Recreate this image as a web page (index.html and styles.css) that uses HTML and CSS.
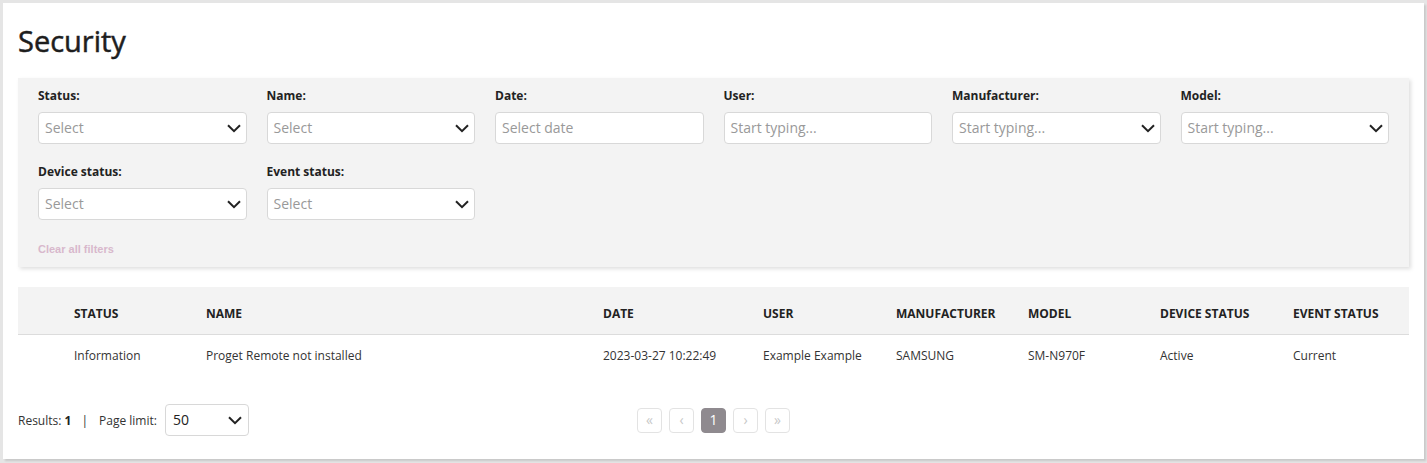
FILE: index.html
```html
<!DOCTYPE html>
<html lang="en">
<head>
<meta charset="utf-8">
<title>Security</title>
<link rel="stylesheet" href="styles.css">
</head>
<body>
<div class="card">
  <h1 class="title">Security</h1>

  <section class="filters">
    <div class="filter-grid">
      <div class="field">
        <label class="label">Status:</label>
        <div class="control"><span class="ph">Select</span><svg class="chev" width="14" height="9" viewBox="0 0 14 9"><path d="M1 1.2l6 6 6-6" fill="none" stroke="#222" stroke-width="2"/></svg></div>
      </div>
      <div class="field">
        <label class="label">Name:</label>
        <div class="control"><span class="ph">Select</span><svg class="chev" width="14" height="9" viewBox="0 0 14 9"><path d="M1 1.2l6 6 6-6" fill="none" stroke="#222" stroke-width="2"/></svg></div>
      </div>
      <div class="field">
        <label class="label">Date:</label>
        <div class="control"><span class="ph">Select date</span></div>
      </div>
      <div class="field">
        <label class="label">User:</label>
        <div class="control"><span class="ph">Start typing...</span></div>
      </div>
      <div class="field">
        <label class="label">Manufacturer:</label>
        <div class="control"><span class="ph">Start typing...</span><svg class="chev" width="14" height="9" viewBox="0 0 14 9"><path d="M1 1.2l6 6 6-6" fill="none" stroke="#222" stroke-width="2"/></svg></div>
      </div>
      <div class="field">
        <label class="label">Model:</label>
        <div class="control"><span class="ph">Start typing...</span><svg class="chev" width="14" height="9" viewBox="0 0 14 9"><path d="M1 1.2l6 6 6-6" fill="none" stroke="#222" stroke-width="2"/></svg></div>
      </div>
      <div class="field">
        <label class="label">Device status:</label>
        <div class="control"><span class="ph">Select</span><svg class="chev" width="14" height="9" viewBox="0 0 14 9"><path d="M1 1.2l6 6 6-6" fill="none" stroke="#222" stroke-width="2"/></svg></div>
      </div>
      <div class="field">
        <label class="label">Event status:</label>
        <div class="control"><span class="ph">Select</span><svg class="chev" width="14" height="9" viewBox="0 0 14 9"><path d="M1 1.2l6 6 6-6" fill="none" stroke="#222" stroke-width="2"/></svg></div>
      </div>
    </div>
    <div class="clear">Clear all filters</div>
  </section>

  <table class="grid">
    <colgroup>
      <col class="c-sel"><col class="c-132"><col class="c-name"><col class="c-date"><col class="c-133"><col class="c-132"><col class="c-132"><col class="c-133"><col>
    </colgroup>
    <thead>
      <tr><th></th><th>Status</th><th>Name</th><th>Date</th><th>User</th><th>Manufacturer</th><th>Model</th><th>Device status</th><th>Event status</th></tr>
    </thead>
    <tbody>
      <tr><td></td><td>Information</td><td>Proget Remote not installed</td><td>2023-03-27 10:22:49</td><td>Example Example</td><td>SAMSUNG</td><td>SM-N970F</td><td>Active</td><td>Current</td></tr>
    </tbody>
  </table>

  <div class="footer">
    <div class="results">
      <span>Results: <b>1</b></span>
      <span class="sep">|</span>
      <span>Page limit:</span>
      <div class="control limit"><span class="val">50</span><svg class="chev" width="14" height="9" viewBox="0 0 14 9"><path d="M1 1.2l6 6 6-6" fill="none" stroke="#222" stroke-width="2"/></svg></div>
    </div>
    <nav class="pager">
      <span class="pg">&laquo;</span>
      <span class="pg">&lsaquo;</span>
      <span class="pg active">1</span>
      <span class="pg">&rsaquo;</span>
      <span class="pg">&raquo;</span>
    </nav>
    <div></div>
  </div>
</div>
</body>
</html>
```

FILE: styles.css
```css
* { box-sizing: border-box; }

html, body { margin: 0; }

body {
  background: #e5e5e5;
  padding: 3px 3px 4px 3px;
  font-family: "Open Sans", "Liberation Sans", sans-serif;
  color: #333;
  font-size: 12px;
}

.card {
  background: #fff;
  height: 456px;
  padding: 18px 15px 0 15px;
  box-shadow: 2px 2px 2px rgba(0, 0, 0, 0.13);
}

.title {
  margin: 0 0 17px 0;
  font-size: 29px;
  line-height: 40px;
  font-weight: 400;
  color: #1e1e1e;
  -webkit-text-stroke: 0.5px #1e1e1e;
}

.filters {
  background: #f3f3f3;
  padding: 10px 20px 11px 20px;
  box-shadow: 2px 2px 4px rgba(0, 0, 0, 0.13);
}

.filter-grid {
  display: grid;
  grid-template-columns: repeat(6, 1fr);
  column-gap: 20px;
  row-gap: 20px;
}

.label {
  display: block;
  font-weight: 700;
  font-size: 12px;
  line-height: 16px;
  color: #222;
  margin-bottom: 8px;
}

.control {
  height: 32px;
  background: #fff;
  border: 1px solid #d8d8d8;
  border-radius: 4px;
  display: flex;
  align-items: center;
  justify-content: space-between;
  padding: 0 5px 2px 6px;
  font-size: 14px;
}

.ph { color: #999; }

.chev { display: block; flex: none; margin-top: 2px; }

.clear {
  margin-top: 22px;
  font-family: "Liberation Sans", Arial, sans-serif;
  font-weight: 700;
  font-size: 11px;
  line-height: 14px;
  color: #d8b8cc;
}

.grid {
  margin-top: 20px;
  width: 100%;
  border-collapse: collapse;
  table-layout: fixed;
}

.c-sel { width: 56px; }
.c-132 { width: 132px; }
.c-133 { width: 133px; }
.c-name { width: 397px; }
.c-date { width: 160px; }

.grid th {
  background: #f3f3f3;
  text-align: left;
  text-transform: uppercase;
  font-weight: 700;
  font-size: 12px;
  line-height: 16px;
  color: #222;
  padding: 19px 0 12px 0;
  border-bottom: 1px solid #dcdcdc;
}

.grid td {
  font-size: 12px;
  line-height: 16px;
  color: #333;
  padding: 13px 0 11px 0;
}

.footer {
  margin-top: 29px;
  display: grid;
  grid-template-columns: 1fr auto 1fr;
  align-items: center;
}

.results {
  display: flex;
  align-items: center;
  font-size: 12px;
  color: #333;
}

.results b { color: #222; }

.sep { margin: 0 11px 0 10px; color: #333; }

.limit {
  width: 84px;
  margin-left: 8px;
  padding: 0 6px 2px 7px;
}

.val { color: #222; }

.pager {
  display: flex;
  gap: 7px;
}

.pg {
  width: 25px;
  height: 25px;
  border: 1px solid #e3e3e3;
  border-radius: 4px;
  display: flex;
  align-items: center;
  justify-content: center;
  color: #c8c8c8;
  font-size: 14px;
  line-height: 1;
}

.pg.active {
  background: #8f8a8f;
  border-color: #8f8a8f;
  color: #fff;
}
```
